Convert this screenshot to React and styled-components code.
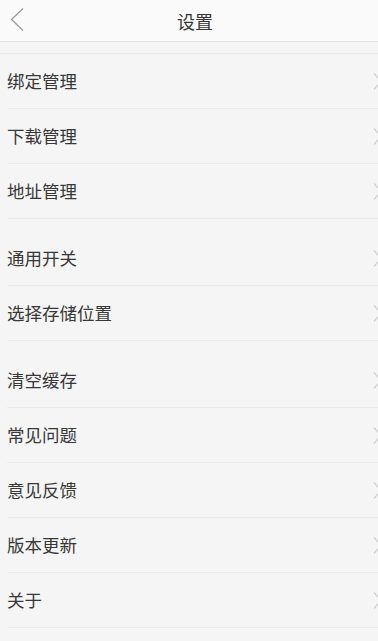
import React from "react";
import styled, { createGlobalStyle } from "styled-components";

const Global = createGlobalStyle`
  html, body {
    margin: 0;
    padding: 0;
    background: #f5f5f5;
    overflow-x: hidden;
  }
  body {
    font-family: "Noto Sans CJK SC", "Noto Sans", sans-serif;
  }
`;

const Page = styled.div`
  width: 390px;
  min-height: 641px;
  background: #f5f5f5;
  overflow: hidden;
`;

const Header = styled.header`
  position: relative;
  height: 41px;
  display: flex;
  align-items: center;
  justify-content: center;
  background: #fafafa;
  border-bottom: 1px solid #e4e4e4;
`;

const BackButton = styled.button`
  position: absolute;
  left: 9px;
  top: 7px;
  width: 16px;
  height: 24px;
  padding: 0;
  border: none;
  background: none;
  display: flex;
  align-items: center;
  justify-content: center;
`;

const Title = styled.h1`
  margin: 0;
  font-size: 18px;
  font-weight: 400;
  color: #353535;
  line-height: 1;
`;

const Group = styled.section`
  margin-top: ${(p) => (p.$first ? "11px" : "12px")};
  border-top: ${(p) => (p.$first ? "1px solid #ebebeb" : "none")};
`;

const Row = styled.div`
  margin-left: 7px;
  height: 54px;
  display: flex;
  align-items: center;
  justify-content: space-between;
  padding-right: 8px;
  border-bottom: 1px solid #ebebeb;
`;

const Label = styled.span`
  font-size: 17.5px;
  color: #383838;
  line-height: 1;
`;

const Chevron = () => (
  <svg width="9" height="17" viewBox="0 0 9 17" fill="none">
    <path d="M1 0.5 L8 8.5 L1 16.5" stroke="#cdcdcd" strokeWidth="1.2" />
  </svg>
);

const BackIcon = () => (
  <svg width="14" height="23" viewBox="0 0 14 23" fill="none">
    <path d="M13 0.5 L1.5 11.5 L13 22.5" stroke="#9c9c9c" strokeWidth="1.3" />
  </svg>
);

const groups = [
  ["绑定管理", "下载管理", "地址管理"],
  ["通用开关", "选择存储位置"],
  ["清空缓存", "常见问题", "意见反馈", "版本更新", "关于"],
];

export default function App() {
  return (
    <Page>
      <Global />
      <Header>
        <BackButton aria-label="back">
          <BackIcon />
        </BackButton>
        <Title>设置</Title>
      </Header>
      {groups.map((items, gi) => (
        <Group key={gi} $first={gi === 0}>
          {items.map((label) => (
            <Row key={label}>
              <Label>{label}</Label>
              <Chevron />
            </Row>
          ))}
        </Group>
      ))}
    </Page>
  );
}
